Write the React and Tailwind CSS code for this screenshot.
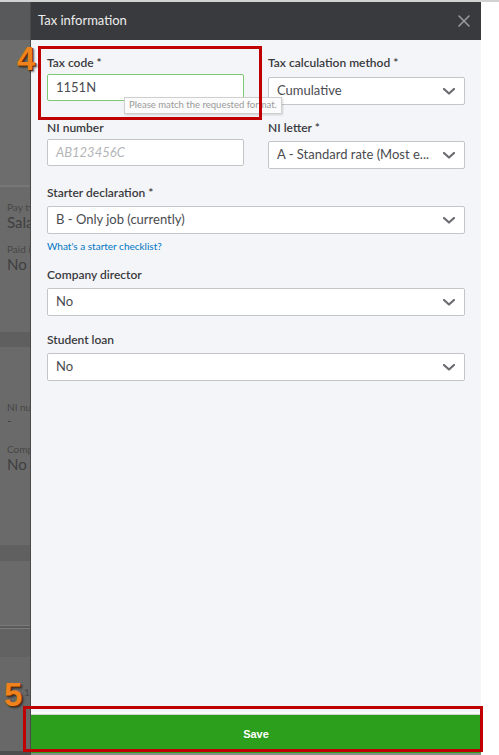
import React from "react";

function Chevron() {
  return (
    <svg width="12" height="7" viewBox="0 0 12 7" className="shrink-0">
      <polyline points="1,1 6,5.5 11,1" fill="none" stroke="#6b6c72" strokeWidth="2.2" strokeLinecap="round" strokeLinejoin="round" />
    </svg>
  );
}

function Label({ children, className = "" }) {
  return (
    <div className={`h-[16px] leading-[16px] text-[12px] font-semibold text-[#393a3d] ${className}`}>
      {children}
    </div>
  );
}

function Select({ value }) {
  return (
    <div className="h-[28px] flex items-center justify-between pl-[8px] pr-[9px] bg-white border border-[#c4c5c9] rounded-[2px]">
      <span className="text-[13px] text-[#4a4b50] whitespace-nowrap overflow-hidden">{value}</span>
      <Chevron />
    </div>
  );
}

// dimmed page behind the side panel
function Backdrop() {
  return (
    <div className="w-[30px] shrink-0 flex flex-col overflow-hidden text-[#3f3f3f] whitespace-nowrap">
      <div className="h-[38px] bg-[#58595b]" />
      <div className="h-[145px] bg-[#6d6d6d]" />
      <div className="h-[2px] bg-[#777777]" />
      <div className="h-[145px] bg-[#6a6a6a] pl-[7px] pt-[14px]">
        <div className="text-[10px] leading-[12px] text-[#474747]">Pay type</div>
        <div className="text-[15px] leading-[18px]">Salary</div>
        <div className="text-[10px] leading-[12px] text-[#474747] mt-[12px]">Paid in</div>
        <div className="text-[15px] leading-[18px]">No</div>
      </div>
      <div className="h-[15px] bg-[#5f5f5f]" />
      <div className="h-[198px] bg-[#6a6a6a] pl-[7px] pt-[54px]">
        <div className="text-[10px] leading-[12px] text-[#474747]">NI number</div>
        <div className="text-[12px] leading-[16px]">-</div>
        <div className="text-[10px] leading-[12px] text-[#474747] mt-[14px]">Company</div>
        <div className="text-[15px] leading-[18px]">No</div>
      </div>
      <div className="h-[16px] bg-[#606060]" />
      <div className="h-[64px] bg-[#6a6a6a]" />
      <div className="h-[1px] bg-[#7a7a7a]" />
      <div className="h-[2px] bg-[#5a5a5a]" />
      <div className="h-[1px] bg-[#7a7a7a]" />
      <div className="h-[28px] bg-[#626262]" />
      <div className="flex-1 bg-[#686868] pl-[24px] pt-[30px]">
        <div className="text-[10px] leading-[11px] text-[#474747]">1.00</div>
      </div>
      <div className="h-[4px] bg-[#4e4e4e]" />
    </div>
  );
}

export default function App() {
  return (
    <div className="w-[499px] h-[755px] bg-white flex flex-col relative overflow-hidden" style={{ fontFamily: "Lato, 'Open Sans', sans-serif" }}>
      <div className="h-[2px] bg-[#d2d2d2]" />
      <div className="flex flex-1 min-h-0">
        <Backdrop />

        {/* side panel */}
        <div className="w-[451px] shrink-0 flex flex-col border-l border-[#4a4a4a] bg-[#f4f5f8]">
          <div className="h-[38px] shrink-0 bg-[#393a3d] flex items-center justify-between pl-[7px] pr-[11px]">
            <span className="text-[13px] text-[#eeeeee]">Tax information</span>
            <svg width="12" height="12" viewBox="0 0 12 12">
              <path d="M1 1 L11 11 M11 1 L1 11" stroke="#9c9da1" strokeWidth="1.5" strokeLinecap="round" />
            </svg>
          </div>

          <div className="flex-1 px-[16px] pt-[15px]">
            <div className="grid grid-cols-2 gap-x-[24px] items-start">
              <div className="flex flex-col relative">
                <Label>Tax code *</Label>
                <div className="mt-[3px] h-[27px] flex items-center pl-[8px] bg-white border-[1.5px] border-[#7dc872] rounded-[2px]">
                  <span className="text-[13px] text-[#4a4b50]">1151N</span>
                </div>
                <div className="absolute left-[77px] top-[42px] h-[17px] px-[4px] flex items-center bg-[#fbfbfb] border border-[#cfcfcf] shadow-[1px_1px_2px_rgba(0,0,0,0.15)] whitespace-nowrap">
                  <span className="text-[9.5px] text-[#9a9a9a]">Please match the requested format.</span>
                </div>
              </div>
              <div className="flex flex-col">
                <Label>Tax calculation method *</Label>
                <div className="mt-[6px]">
                  <Select value="Cumulative" />
                </div>
              </div>
            </div>

            <div className="grid grid-cols-2 gap-x-[24px] items-start mt-[15px]">
              <div className="flex flex-col">
                <Label>NI number</Label>
                <div className="mt-[3px] h-[27px] flex items-center pl-[8px] bg-white border border-[#c4c5c9] rounded-[2px]">
                  <span className="text-[13px] italic text-[#b4b5b8]">AB123456C</span>
                </div>
              </div>
              <div className="flex flex-col">
                <Label>NI letter *</Label>
                <div className="mt-[5px]">
                  <Select value="A - Standard rate (Most e..." />
                </div>
              </div>
            </div>

            <Label className="mt-[16px]">Starter declaration *</Label>
            <div className="mt-[5px]">
              <Select value="B - Only job (currently)" />
            </div>
            <div className="mt-[5px] h-[14px] leading-[14px] text-[10px] text-[#0077c5]">What's a starter checklist?</div>

            <Label className="mt-[14px]">Company director</Label>
            <div className="mt-[5px]">
              <Select value="No" />
            </div>

            <Label className="mt-[16px]">Student loan</Label>
            <div className="mt-[5px]">
              <Select value="No" />
            </div>
          </div>

          <div className="h-[3px] bg-white border-b border-[#cfd8cc]" />
          <button className="h-[38px] shrink-0 bg-[#2ca01c] flex items-center justify-center">
            <span className="text-[11px] font-bold text-white" style={{ fontFamily: "'Liberation Sans', Arial, sans-serif" }}>Save</span>
          </button>
          <div className="h-[2px] bg-[#8a8a8a]" />
        </div>

        <div className="flex-1 bg-white" />
      </div>

      {/* step callouts */}
      <div className="absolute left-[38px] top-[46px] w-[224px] h-[74px] border-[3px] border-[#c00000]" />
      <div className="absolute left-[17px] top-[42px] text-[33px] leading-[34px] font-black text-[#f0821e] [text-shadow:1px_1px_0_#5a2a00,2px_2px_2px_rgba(0,0,0,0.5)]" style={{ fontFamily: "'Liberation Sans', Arial, sans-serif" }}>4</div>
      <div className="absolute left-[23px] top-[706px] w-[460px] h-[46px] border-[3px] border-[#c00000]" />
      <div className="absolute left-[4px] top-[678px] text-[33px] leading-[34px] font-black text-[#f0821e] [text-shadow:1px_1px_0_#5a2a00,2px_2px_2px_rgba(0,0,0,0.5)]" style={{ fontFamily: "'Liberation Sans', Arial, sans-serif" }}>5</div>
    </div>
  );
}
